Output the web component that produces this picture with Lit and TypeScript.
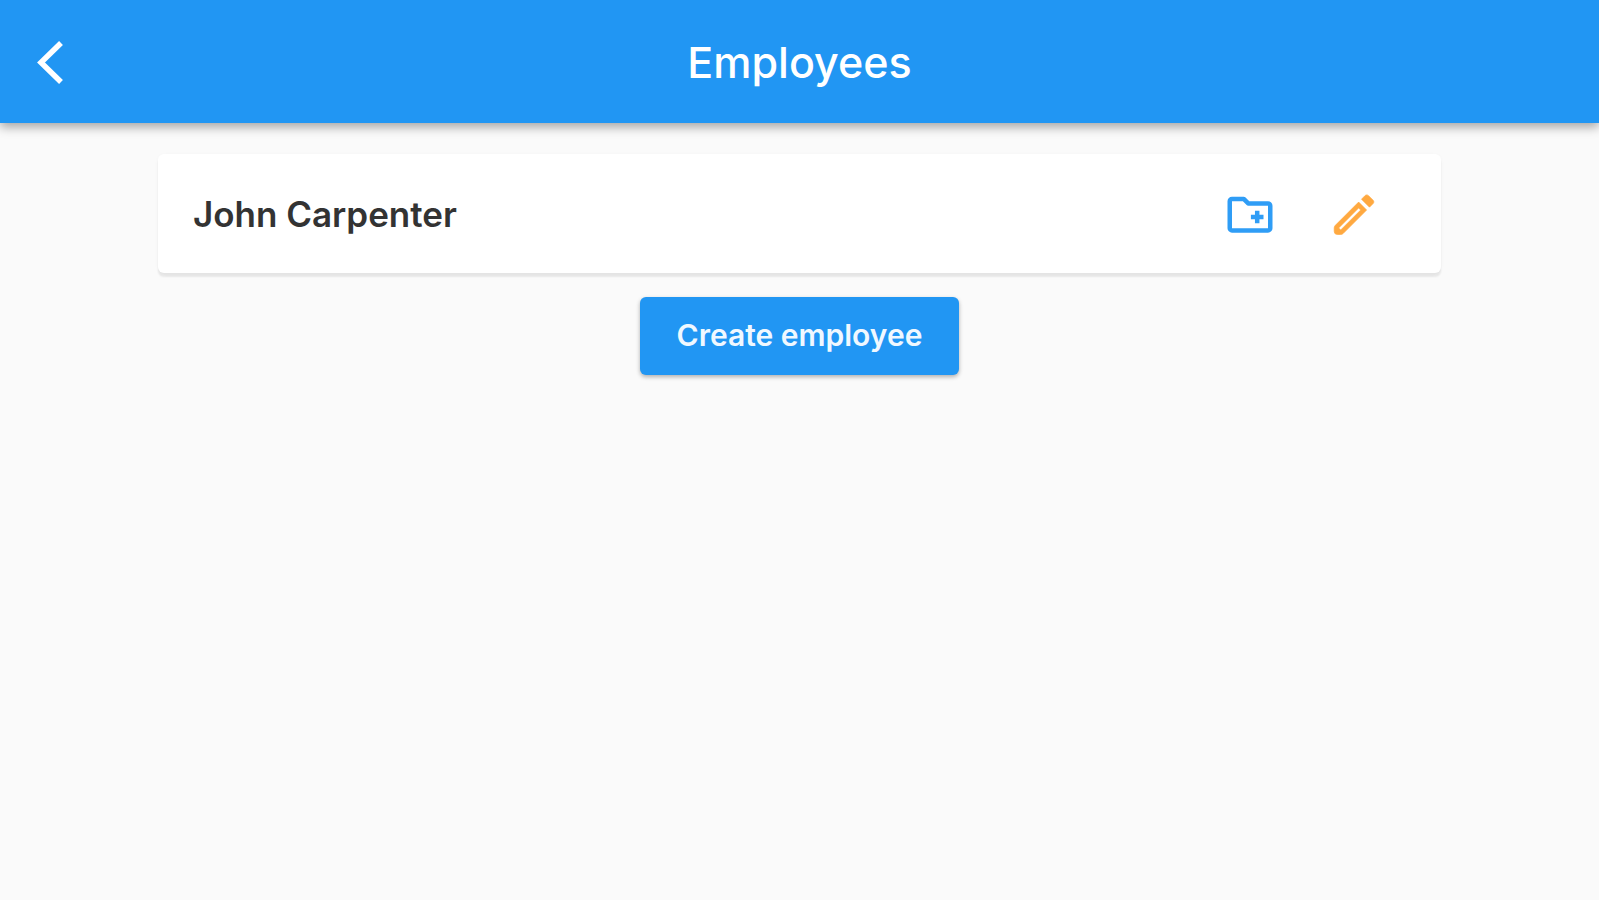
import { LitElement, html, css } from "lit";
import { customElement, property } from "lit/decorators.js";

@customElement("employee-card")
class EmployeeCard extends LitElement {
  @property() name = "";

  static styles = css`
    :host { display: block; }
    .card {
      display: flex;
      align-items: center;
      gap: 50px;
      padding: 31px 60px 30px 35px;
      background: #fff;
      border-radius: 6px;
      box-shadow: 0 4px 2px rgba(0, 0, 0, 0.07), 0 1px 4px rgba(0, 0, 0, 0.03);
    }
    .name {
      flex: 1;
      margin: 0;
      font-size: 35px;
      line-height: 58px;
      font-weight: 600;
      color: #333;
    }
    .icon {
      display: flex;
      padding: 0;
      border: 0;
      background: none;
      cursor: pointer;
    }
    .folder { color: #2f9df6; }
    .edit { color: #ffa940; }
    svg { width: 54px; height: 54px; }
  `;

  render() {
    return html`
      <article class="card">
        <h2 class="name">${this.name}</h2>
        <button class="icon folder" aria-label="Add folder">
          <svg viewBox="0 0 24 24" fill="none" stroke="currentColor" stroke-width="2" stroke-linejoin="round">
            <path d="M3 6.300a1 1 0 0 1 1-1h5.200l2 2H20a1 1 0 0 1 1 1v10a1 1 0 0 1-1 1H4a1 1 0 0 1-1-1z" />
            <path d="M15.200 10.500v5.600M12.400 13.300h5.600" />
          </svg>
        </button>
        <button class="icon edit" aria-label="Edit">
          <svg viewBox="0 -0.3 24 24" fill="currentColor" stroke="currentColor" stroke-width="0.3" stroke-linejoin="round">
            <path d="M14.060 9.020l.92.92L6.100 18.800 5.200 17.900l8.860-8.880M17.660 3.200c-.25 0-.51.1-.7.29l-1.630 1.630 3.550 3.550 1.630-1.630c.39-.39.39-1.020 0-1.410l-2.140-2.140c-.2-.2-.45-.29-.71-.29zm-3.600 3.190L3.600 16.850a1.600 1.600 0 0 0-.4 1.100V19.400a1.400 1.400 0 0 0 1.400 1.400h1.450a1.600 1.600 0 0 0 1.100-.4L17.610 9.940l-3.550-3.550z" />
          </svg>
        </button>
      </article>
    `;
  }
}

@customElement("app-root")
class AppRoot extends LitElement {
  static styles = css`
    :host {
      display: block;
      min-height: 100vh;
      background: #fafafa;
      font-family: Inter, Roboto, sans-serif;
    }
    .bar {
      display: grid;
      grid-template-columns: 100px 1fr 100px;
      align-items: center;
      padding: 32px 0 31px;
      background: #2196f3;
      box-shadow: 0 4px 10px rgba(0, 0, 0, 0.35);
      color: #fff;
    }
    .back {
      display: flex;
      justify-content: center;
      padding: 0;
      border: 0;
      background: none;
      color: inherit;
      cursor: pointer;
    }
    .back svg { width: 48px; height: 48px; }
    .title {
      margin: 0;
      text-align: center;
      font-size: 43px;
      line-height: 60px;
      font-weight: 500;
    }
    .content {
      display: flex;
      flex-direction: column;
      align-items: center;
      gap: 24px;
      padding: 31px 0;
    }
    .list { width: 80.25%; }
    .create {
      padding: 19px 37px 20px;
      border: 0;
      border-radius: 6px;
      background: #2196f3;
      box-shadow: 0 2px 4px rgba(0, 0, 0, 0.3);
      color: #f0f8ff;
      font-family: inherit;
      font-size: 30px;
      line-height: 39px;
      font-weight: 600;
      cursor: pointer;
    }
  `;

  render() {
    return html`
      <header class="bar">
        <button class="back" aria-label="Back">
          <svg viewBox="0 0 48 48" fill="none" stroke="currentColor" stroke-width="5.500">
            <path d="M35 5L15 24.500L35 44" />
          </svg>
        </button>
        <h1 class="title">Employees</h1>
      </header>
      <main class="content">
        <employee-card class="list" name="John Carpenter"></employee-card>
        <button class="create">Create employee</button>
      </main>
    `;
  }
}
